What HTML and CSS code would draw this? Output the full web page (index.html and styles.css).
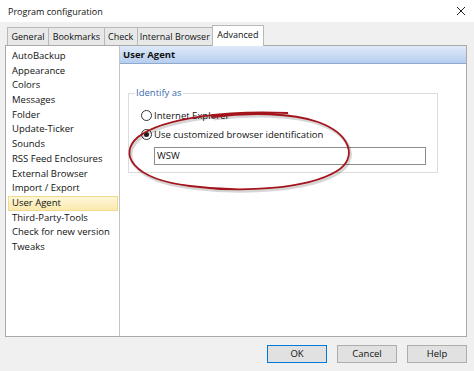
FILE: index.html
```html
<!DOCTYPE html>
<html>
<head>
<meta charset="utf-8">
<link rel="stylesheet" href="styles.css">
</head>
<body>
<div class="dialog">
  <div class="titlebar">
    <span class="title">Program configuration</span>
    <svg class="close" width="10" height="10" viewBox="0 0 10 10"><path d="M1 1L9 9M9 1L1 9" stroke="#222" stroke-width="1" fill="none"/></svg>
  </div>
  <div class="tabs">
    <div class="tab">General</div>
    <div class="tab">Bookmarks</div>
    <div class="tab">Check</div>
    <div class="tab narrow">Internal Browser</div>
    <div class="tab active">Advanced</div>
  </div>
  <div class="frame">
    <ul class="list">
      <li>AutoBackup</li>
      <li>Appearance</li>
      <li>Colors</li>
      <li>Messages</li>
      <li>Folder</li>
      <li>Update-Ticker</li>
      <li>Sounds</li>
      <li>RSS Feed Enclosures</li>
      <li>External Browser</li>
      <li>Import / Export</li>
      <li class="sel">User Agent</li>
      <li>Third-Party-Tools</li>
      <li>Check for new version</li>
      <li>Tweaks</li>
    </ul>
    <div class="panel">
      <div class="panel-head">User Agent</div>
      <div class="panel-body">
        <fieldset class="group">
          <legend>Identify as</legend>
          <div class="radio"><span class="dot"></span>Internet Explorer</div>
          <div class="radio"><span class="dot on"></span>Use customized browser identification</div>
          <div class="input">WSW</div>
        </fieldset>
      </div>
      <svg class="ellipse" width="240" height="95" viewBox="0 0 240 95">
        <path d="M168 12 C 112 9, 44 16, 18 36 C -2 53, 12 78, 70 85 C 122 92, 188 88, 217 70 C 238 57, 231 33, 198 21 C 172 12, 130 11, 92 16" fill="none" stroke="rgba(0,0,0,0.16)" stroke-width="3" transform="translate(1.5,2)"/>
        <path d="M168 12 C 112 9, 44 16, 18 36 C -2 53, 12 78, 70 85 C 122 92, 188 88, 217 70 C 238 57, 231 33, 198 21 C 172 12, 130 11, 92 16" fill="none" stroke="#a3141c" stroke-width="1.8"/>
      </svg>
    </div>
  </div>
  <div class="buttons">
    <div class="btn default">OK</div>
    <div class="btn">Cancel</div>
    <div class="btn">Help</div>
  </div>
</div>
</body>
</html>
```
FILE: styles.css
```css
html, body {
  margin: 0;
  padding: 0;
}
body {
  width: 474px;
  height: 371px;
  background: #f0f0f0;
  font-family: "Open Sans", "Noto Sans", sans-serif;
  font-size: 9.5px;
  color: #111;
  overflow: hidden;
}
.dialog {
  display: flex;
  flex-direction: column;
  height: 371px;
}
.titlebar {
  height: 22px;
  background: #fff;
  display: flex;
  align-items: center;
  justify-content: space-between;
  padding: 0 8px 0 8px;
  font-size: 9px;
}
.title {
  color: #111;
}
.tabs {
  display: flex;
  align-items: flex-end;
  margin: 3px 0 0 7px;
  height: 20px;
  position: relative;
  z-index: 2;
  font-size: 9px;
}
.tab {
  height: 17px;
  line-height: 17px;
  padding: 0 3.5px;
  border: 1px solid #b9b9b9;
  border-bottom: none;
  background: #e8e8e8;
  margin-right: -1px;
  color: #111;
}
.tab.narrow {
  padding: 0 2px;
}
.tab.active {
  height: 20px;
  line-height: 18px;
  background: #fff;
  padding: 0 4.5px;
  margin-bottom: -1px;
}
.frame {
  margin: 0 7px 0 5px;
  height: 290px;
  border: 1px solid #a9a9a9;
  background: #fff;
  display: flex;
}
.list {
  list-style: none;
  margin: 0;
  padding: 3px 0 0 0;
  width: 113px;
  border-right: 1px solid #c4c4c4;
}
.list li {
  height: 14.7px;
  line-height: 14.7px;
  padding-left: 4px;
  margin: 0 1px 0 2px;
  white-space: nowrap;
}
.list li.sel {
  background: linear-gradient(#fdf6d8, #fbeaae);
  border: 1px solid #f3d98e;
  height: 12.7px;
  line-height: 12.7px;
  padding-left: 3px;
}
.panel {
  flex: 1;
  display: flex;
  flex-direction: column;
  position: relative;
}
.panel-head {
  height: 17px;
  line-height: 17px;
  padding-left: 3px;
  font-weight: bold;
  background: linear-gradient(#dfeafa, #b6cdee);
  border-bottom: 1px solid #8fa9cf;
  color: #111;
}
.panel-body {
  padding: 23px 0 0 8px;
}
.group {
  width: 310px;
  height: 86px;
  margin: 0;
  padding: 0 0 0 15px;
  border: 1px solid #dcdcdc;
  box-sizing: border-box;
}
.group legend {
  color: #3c6bb0;
  padding: 0 1px;
  margin-left: -9px;
  line-height: 12px;
}
.radio {
  display: flex;
  align-items: center;
  height: 19px;
  margin-left: -3px;
}
.radio:first-of-type {
  margin-top: 7px;
}
.dot {
  width: 9px;
  height: 9px;
  border: 1px solid #333;
  border-radius: 50%;
  margin-right: 2px;
  display: inline-block;
  position: relative;
  background: #fff;
}
.dot.on::after {
  content: "";
  position: absolute;
  left: 2px;
  top: 2px;
  width: 5px;
  height: 5px;
  border-radius: 50%;
  background: #222;
}
.input {
  margin: 3px 0 0 10px;
  width: 272px;
  height: 18px;
  box-sizing: border-box;
  border: 1px solid #8c8c8c;
  line-height: 16px;
  padding-left: 2px;
  background: #fff;
}
.ellipse {
  position: absolute;
  left: 0;
  top: 55px;
}
.buttons {
  display: flex;
  justify-content: flex-end;
  gap: 10px;
  margin: 8px 7px 0 0;
}
.btn {
  width: 60px;
  height: 18px;
  box-sizing: border-box;
  line-height: 16px;
  text-align: center;
  background: #e1e1e1;
  border: 1px solid #adadad;
}
.btn.default {
  border: 1px solid #0078d7;
}
```
